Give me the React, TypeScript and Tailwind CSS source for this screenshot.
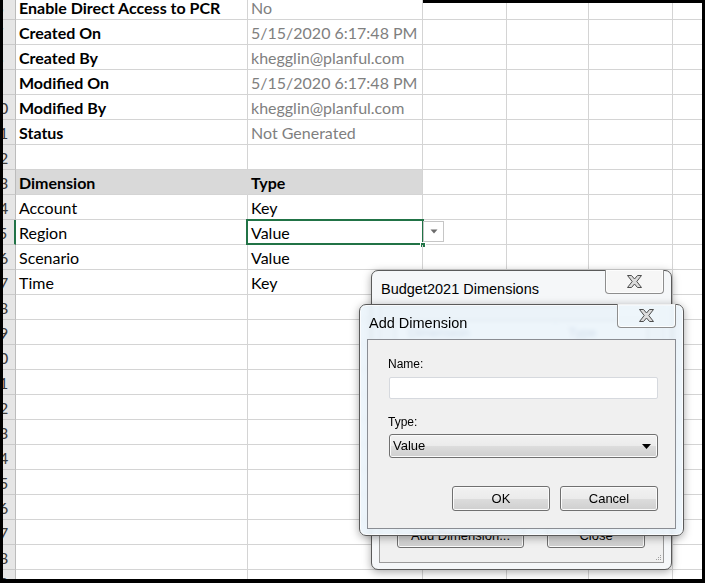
import React from 'react';

type Row = { n: number; a?: string; b?: string; kind?: 'meta' | 'head' };

const rows: Row[] = [
  { n: 6, a: 'Enable Direct Access to PCR', b: 'No', kind: 'meta' },
  { n: 7, a: 'Created On', b: '5/15/2020 6:17:48 PM', kind: 'meta' },
  { n: 8, a: 'Created By', b: 'khegglin@planful.com', kind: 'meta' },
  { n: 9, a: 'Modified On', b: '5/15/2020 6:17:48 PM', kind: 'meta' },
  { n: 10, a: 'Modified By', b: 'khegglin@planful.com', kind: 'meta' },
  { n: 11, a: 'Status', b: 'Not Generated', kind: 'meta' },
  { n: 12 },
  { n: 13, a: 'Dimension', b: 'Type', kind: 'head' },
  { n: 14, a: 'Account', b: 'Key' },
  { n: 15, a: 'Region', b: 'Value' },
  { n: 16, a: 'Scenario', b: 'Value' },
  { n: 17, a: 'Time', b: 'Key' },
  ...Array.from({ length: 12 }, (_, i) => ({ n: 18 + i })),
];

const CloseGlyph: React.FC = () => (
  <svg width="17" height="15" viewBox="0 0 17 15">
    <polygon
      points="1.5,1.5 5.5,1.5 8.5,5 11.5,1.5 15.5,1.5 10.8,7.5 15.5,13.5 11.5,13.5 8.5,10 5.5,13.5 1.5,13.5 6.2,7.5"
      fill="#dcdcdc"
      stroke="#4d4d4d"
      strokeWidth="1"
      strokeLinejoin="round"
    />
  </svg>
);

const CloseButton: React.FC<{ glass?: boolean }> = ({ glass }) => (
  <div
    className={`absolute right-[7px] top-[-1px] w-[59px] h-[24px] flex items-center justify-center rounded-b-[4px] border border-t-0 border-[#8e8e8e] ${
      glass ? 'bg-[rgba(240,247,252,0.6)]' : 'bg-[#f6f6f6]'
    } shadow-[inset_0_0_0_1px_rgba(255,255,255,0.8)]`}
  >
    <CloseGlyph />
  </div>
);

const winFace =
  'rounded-[3px] border border-[#707070] bg-[linear-gradient(#f2f2f2_0%,#ebebeb_50%,#dddddd_50%,#cfcfcf_100%)] shadow-[inset_0_0_0_1px_#fbfbfb] flex items-center text-[13px] text-black';
const winButton = `${winFace} h-[25px] justify-center`;

const SheetRow: React.FC<{ row: Row; first: boolean }> = ({ row, first }) => {
  const active = row.n === 15;
  const head = row.kind === 'head';
  const meta = row.kind === 'meta';
  return (
    <div className={`flex shrink-0 ${first ? 'h-[20px]' : 'h-[25px]'}`}>
      <div
        className={`w-[13px] shrink-0 overflow-hidden flex items-end justify-end bg-[#e6e6e6] border-b border-b-[#c9c9c9] ${
          active ? 'border-r-2 border-r-[#217346]' : 'border-r border-r-[#bcbcbc]'
        }`}
      >
        <span className="shrink-0 w-[26px] mr-[3px] text-center text-[16px] leading-[19px] pb-[2px] text-[#3a3a3a]">
          {row.n}
        </span>
      </div>
      <div
        className={`w-[232px] shrink-0 flex items-end pl-[3px] border-b border-b-[#d4d4d4] border-r ${
          head ? 'bg-[#d9d9d9] border-r-[#d9d9d9]' : 'border-r-[#d4d4d4]'
        }`}
      >
        {row.a && (
          <span className={`whitespace-nowrap text-[16px] leading-[19px] pb-[2px] text-black ${meta || head ? 'font-bold' : ''}`}>
            {row.a}
          </span>
        )}
      </div>
      <div
        className={`relative w-[175px] shrink-0 flex items-end pl-[3px] border-b border-b-[#d4d4d4] border-r border-r-[#d4d4d4] ${
          head ? 'bg-[#d9d9d9]' : ''
        }`}
      >
        {row.b && (
          <span
            className={`whitespace-nowrap text-[16px] leading-[19px] pb-[2px] ${
              meta ? 'text-[#7f7f7f]' : 'text-black'
            } ${head ? 'font-bold' : ''}`}
          >
            {row.b}
          </span>
        )}
        {active && (
          <>
            <div className="absolute left-[-2px] top-[-1px] w-[178px] h-[26px] border-2 border-[#217346]" />
            <div className="absolute left-[175px] top-[1px] w-[21px] h-[21px] bg-white border border-[#c6c6c6] flex items-center justify-center">
              <svg width="8" height="5" viewBox="0 0 8 5">
                <polygon points="0.5,0.5 7.5,0.5 4,4.5" fill="#6b6b6b" />
              </svg>
            </div>
            <div className="absolute left-[172px] top-[22px] w-[6px] h-[6px] bg-[#217346] border border-white" />
          </>
        )}
      </div>
      <div className="w-[84px] shrink-0 border-b border-b-[#d4d4d4] border-r border-r-[#d4d4d4]" />
      <div className="w-[82px] shrink-0 border-b border-b-[#d4d4d4] border-r border-r-[#d4d4d4]" />
      <div className="w-[84px] shrink-0 border-b border-b-[#d4d4d4] border-r border-r-[#d4d4d4]" />
      <div className="flex-1 border-b border-b-[#d4d4d4]" />
    </div>
  );
};

export default function App() {
  return (
    <div className="relative w-[705px] h-[583px] overflow-hidden bg-white font-['Lato',sans-serif]">
      {/* Spreadsheet */}
      <div className="h-full flex flex-col overflow-hidden border-l-[3px] border-r-[3px] border-b-[4px] border-black">
        {rows.map((r, i) => (
          <SheetRow key={r.n} row={r} first={i === 0} />
        ))}
      </div>
      <div className="absolute left-[423px] top-0 right-0 h-[3px] bg-black" />

      {/* Back window: Budget2021 Dimensions */}
      <div className="absolute left-[371px] top-[270px] w-[301px] h-[300px] flex flex-col rounded-[7px] border border-[#5a5a5a] bg-[#f5f7f9] shadow-[0_2px_8px_rgba(0,0,0,0.35)] font-['Liberation_Sans',Arial,sans-serif]">
        <div className="h-[34px] shrink-0 pl-[9px] pt-[10px] text-[14.5px] leading-[17px] text-black">
          Budget2021 Dimensions
        </div>
        <CloseButton />
        <div className="relative flex-1 mx-[7px] mb-[6px] flex flex-col border border-[#9a9a9a] bg-[#f0f0f0]">
          <div className="mx-[15px] mt-[14px] flex-1 border border-[#828790] bg-white">
            <div className="h-[24px] flex text-[13px] text-[#3b5a88]">
              <div className="w-[160px] pl-[12px] flex items-center border-r border-[#e0e6ee]">Dimension</div>
              <div className="flex-1 pl-[12px] flex items-center">Type</div>
            </div>
          </div>
          <div className="flex gap-[23px] pl-[17px] pt-[10px] pb-[14px]">
            <div className={`${winButton} w-[127px] h-[24px] border-[#3c7fb1]`}>Add Dimension...</div>
            <div className={`${winButton} w-[98px] h-[24px]`}>Close</div>
          </div>
          <svg className="absolute right-[1px] bottom-[1px]" width="8" height="8" viewBox="0 0 8 8">
            <rect x="6" y="2" width="1" height="1" fill="#a0a0a0" />
            <rect x="4" y="4" width="1" height="1" fill="#a0a0a0" />
            <rect x="6" y="4" width="1" height="1" fill="#a0a0a0" />
            <rect x="2" y="6" width="1" height="1" fill="#a0a0a0" />
            <rect x="4" y="6" width="1" height="1" fill="#a0a0a0" />
            <rect x="6" y="6" width="1" height="1" fill="#a0a0a0" />
          </svg>
        </div>
      </div>

      {/* Front dialog: Add Dimension */}
      <div className="absolute left-[359px] top-[304px] w-[325px] h-[232px] flex flex-col rounded-[7px] border border-[#5a5a5a] bg-[rgba(234,243,250,0.86)] backdrop-blur-[2px] shadow-[0_2px_8px_rgba(0,0,0,0.35),inset_0_0_0_1px_rgba(255,255,255,0.7)] font-['Liberation_Sans',Arial,sans-serif]">
        <div className="h-[34px] shrink-0 pl-[9px] pt-[10px] text-[14.5px] leading-[17px] text-black">
          Add Dimension
        </div>
        <CloseButton glass />
        <div className="flex-1 mx-[7px] mb-[6px] flex flex-col px-[20px] border border-[#8a8d93] bg-[#f0f0f0]">
          <div className="pt-[17px] text-[12px] leading-[14px] text-black">Name:</div>
          <div className="mt-[6px] ml-[1px] w-[269px] h-[22px] rounded-[2px] border border-[#d6d9de] bg-white" />
          <div className="mt-[16px] text-[12px] leading-[14px] text-black">Type:</div>
          <div className={`${winFace} mt-[5px] ml-[1px] w-[269px] h-[24px] justify-between pl-[3px] pr-[6px]`}>
            <span>Value</span>
            <svg width="9" height="5" viewBox="0 0 9 5">
              <polygon points="0,0 9,0 4.5,5" fill="#000" />
            </svg>
          </div>
          <div className="mt-[28px] ml-[1px] w-[269px] flex justify-end gap-[10px]">
            <div className={`${winButton} w-[98px]`}>OK</div>
            <div className={`${winButton} w-[98px]`}>Cancel</div>
          </div>
        </div>
      </div>
    </div>
  );
}
